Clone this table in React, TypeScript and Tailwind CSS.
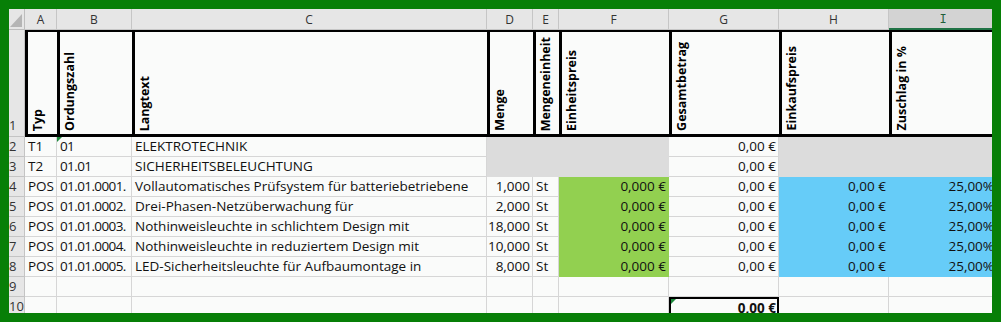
import type { ReactNode } from 'react'

type Key = 'a' | 'b' | 'c' | 'd' | 'e' | 'f' | 'g' | 'h' | 'i'
type Fill = 'gray' | 'green' | 'blue'

interface Row {
  n: number
  v: Partial<Record<Key, string>>
  fill?: Partial<Record<Key, Fill>>
  mark?: Key
  total?: boolean
}

const KEYS: Key[] = ['a', 'b', 'c', 'd', 'e', 'f', 'g', 'h', 'i']
const LETTERS = ['A', 'B', 'C', 'D', 'E', 'F', 'G', 'H']
const RIGHT: Key[] = ['d', 'f', 'g', 'h', 'i']

const HEADS = ['Typ', 'Ordungszahl', 'Langtext', 'Menge', 'Mengeneinheit', 'Einheitspreis', 'Gesamtbetrag', 'Einkaufspreis', 'Zuschlag in %']

const GROUP: Partial<Record<Key, Fill>> = { d: 'gray', e: 'gray', f: 'gray', h: 'gray', i: 'gray' }
const POS: Partial<Record<Key, Fill>> = { f: 'green', h: 'blue', i: 'blue' }

const pos = (n: number, b: string, c: string, d: string): Row => ({
  n,
  v: { a: 'POS', b, c, d, e: 'St', f: '0,000 €', g: '0,00 €', h: '0,00 €', i: '25,00%' },
  fill: POS,
})

const rows: Row[] = [
  { n: 2, v: { a: 'T1', b: '01', c: 'ELEKTROTECHNIK', g: '0,00 €' }, fill: GROUP, mark: 'b' },
  { n: 3, v: { a: 'T2', b: '01.01', c: 'SICHERHEITSBELEUCHTUNG', g: '0,00 €' }, fill: GROUP },
  pos(4, '01.01.0001.', 'Vollautomatisches Prüfsystem für batteriebetriebene', '1,000'),
  pos(5, '01.01.0002.', 'Drei-Phasen-Netzüberwachung für', '2,000'),
  pos(6, '01.01.0003.', 'Nothinweisleuchte in schlichtem Design mit', '18,000'),
  pos(7, '01.01.0004.', 'Nothinweisleuchte in reduziertem Design mit', '10,000'),
  pos(8, '01.01.0005.', 'LED-Sicherheitsleuchte für Aufbaumontage in', '8,000'),
  { n: 9, v: {} },
  { n: 10, v: { g: '0,00 €' }, total: true },
]

const FILL_CLS: Record<Fill | 'none', string> = {
  none: 'bg-[#fafbfa] border-[#d6d6d6]',
  gray: 'bg-[#dcdcdc] border-[#dcdcdc]',
  green: 'bg-[#92d050] border-[#92d050]',
  blue: 'bg-[#66ccf8] border-[#66ccf8]',
}

function Marker() {
  return (
    <svg width="5" height="5" className="absolute left-0 top-0">
      <polygon points="0,0 5,0 0,5" fill="#1d8a3c" />
    </svg>
  )
}

function RowHead({ children, tall }: { children: ReactNode; tall?: boolean }) {
  return (
    <div className={`bg-[#e6e6e6] border-r border-b border-[#c4c4c4] text-[13px] text-[#333] overflow-hidden whitespace-nowrap flex ${tall ? 'items-end pb-[1px]' : 'items-center'} leading-[19px]`}>
      {children}
    </div>
  )
}

export default function App() {
  return (
    <div className="w-[1001px] h-[322px] border-[9px] border-[#077f07] bg-[#077f07] font-['Open_Sans',sans-serif] text-[#111]">
      <div className="w-full h-full overflow-hidden bg-[#fafbfa]">
        <div className="grid grid-cols-[16px_32px_75px_355px_46px_26px_110px_110px_110px_108px] grid-rows-[21px_107px_repeat(9,20px)] w-[988px]">
          {/* column letters */}
          <div className="relative bg-[#e6e6e6] border-r border-b border-[#bdbdbd]">
            <svg width="12" height="13" className="absolute right-[2px] bottom-[2px]">
              <polygon points="12,0 12,13 0,13" fill="#b5b5b5" />
            </svg>
          </div>
          {LETTERS.map(l => (
            <div key={l} className="bg-[#e6e6e6] border-r border-b border-[#c6c6c6] flex items-center justify-center pt-[2px] text-[12px] text-[#333]">
              {l}
            </div>
          ))}
          <div className="bg-[#d3d3d3] border-b-2 border-[#217346] flex items-center justify-center pt-[3px] text-[12px] text-[#1f5f3a] font-['Liberation_Mono',monospace]">
            I
          </div>

          {/* row 1: rotated headings */}
          <RowHead tall>1</RowHead>
          {HEADS.map(h => (
            <div key={h} className="bg-[#fafbfa] border-l-[3px] border-t-2 border-b-[3px] border-black flex items-end pl-[2px] pb-[3px] overflow-hidden">
              <span className="[writing-mode:vertical-rl] rotate-180 whitespace-nowrap font-bold text-[12.5px] leading-[16px] text-black">
                {h}
              </span>
            </div>
          ))}

          {/* data rows */}
          {rows.map(r => (
            <RowRender key={r.n} r={r} />
          ))}
        </div>
      </div>
    </div>
  )
}

function RowRender({ r }: { r: Row }) {
  return (
    <>
      <RowHead>{r.n}</RowHead>
      {KEYS.map(k => {
        const fill = r.fill?.[k] ?? 'none'
        const right = RIGHT.includes(k)
        if (r.total && k === 'g') {
          return (
            <div key={k} className="relative bg-[#fafbfa] border-2 border-black text-[13.5px] leading-[18px] font-bold text-right pr-[1px] whitespace-nowrap">
              <Marker />
              {r.v[k]}
            </div>
          )
        }
        return (
          <div
            key={k}
            className={`relative border-r border-b ${FILL_CLS[fill]} text-[13.5px] leading-[19px] whitespace-nowrap ${right ? 'text-right pr-[2px]' : 'pl-[3px] overflow-hidden'} ${k === 'b' ? 'tracking-[-0.6px]' : ''}`}
          >
            {r.mark === k && <Marker />}
            {r.v[k]}
          </div>
        )
      })}
    </>
  )
}
